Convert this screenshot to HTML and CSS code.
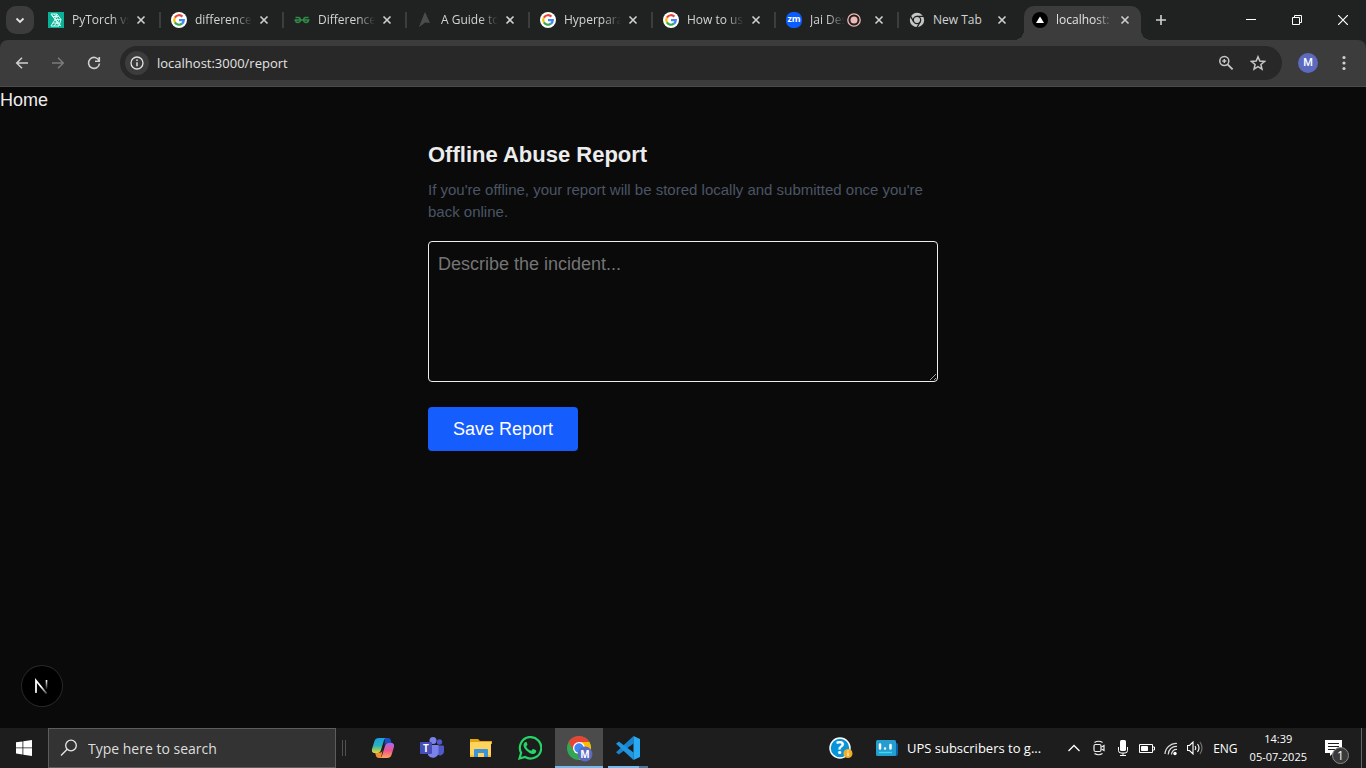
FILE: index.html
```html
<!DOCTYPE html>
<html lang="en">
<head>
<meta charset="utf-8">
<meta name="viewport" content="width=device-width, initial-scale=1">
<title>localhost:3000/report</title>
<link rel="stylesheet" href="styles.css">
</head>
<body>
<svg class="defs" aria-hidden="true">
  <defs>
    <symbol id="google" viewBox="0 0 16 16">
      <circle cx="8" cy="8" r="8" fill="#fff"/>
      <g fill="none" stroke-width="2.2">
        <path d="M3.9 5.6A4.8 4.8 0 0 1 11.4 4.6" stroke="#ea4335"/>
        <path d="M3.9 10.4A4.8 4.8 0 0 1 3.9 5.6" stroke="#fbbc05"/>
        <path d="M11 11.7A4.8 4.8 0 0 1 3.9 10.4" stroke="#34a853"/>
        <path d="M8 8.1H12.8A4.8 4.8 0 0 1 11 11.7" stroke="#4285f4"/>
      </g>
    </symbol>
    <symbol id="close" viewBox="0 0 16 16">
      <path d="M4.5 4.5l7 7M11.5 4.5l-7 7" fill="none" stroke="#d0d0d0" stroke-width="1.6"/>
    </symbol>
  </defs>
</svg>

<header class="browser">
  <div class="tabstrip">
    <button class="tab-search" aria-label="Search tabs"><svg width="16" height="16" viewBox="0 0 16 16"><path d="M4.5 6.5L8 10l3.500-3.500" fill="none" stroke="#e3e3e3" stroke-width="1.800"/></svg></button>
    <div class="tabs">
      <div class="tab">
        <svg class="favicon" viewBox="0 0 16 16"><rect width="16" height="16" fill="#09b096"/><g fill="none" stroke="#d9fff5" stroke-width="1"><path d="M3 2h6l4 5.500-2 6.500H3l4-6.500zM3 2l10 12M6 2l5 6-5 6M9 2l-2 5.500L11 14M4.500 4.500h6M7 7.500h6M4.500 11h7"/></g></svg>
        <span class="title">PyTorch vs</span>
        <button class="close" aria-label="Close tab"><svg width="16" height="16"><use href="#close"/></svg></button>
      </div>
      <div class="tab">
        <svg class="favicon"><use href="#google"/></svg>
        <span class="title">difference</span>
        <button class="close" aria-label="Close tab"><svg width="16" height="16"><use href="#close"/></svg></button>
      </div>
      <div class="tab">
        <svg class="favicon" viewBox="0 0 16 16"><g fill="none" stroke="#2f8d46" stroke-width="1.400"><path d="M1.500 5.500h2.800a2.500 2.500 0 1 1-2.800 3M.5 8h15M14.500 5.500h-2.800a2.500 2.500 0 1 0 2.800 3"/></g></svg>
        <span class="title">Difference</span>
        <button class="close" aria-label="Close tab"><svg width="16" height="16"><use href="#close"/></svg></button>
      </div>
      <div class="tab">
        <svg class="favicon" viewBox="0 0 16 16"><path d="M8 0L2 15l6-4z" fill="#303233"/><path d="M8 0l5 11-5-.500L2 15z" fill="#4a4c4e"/></svg>
        <span class="title">A Guide to</span>
        <button class="close" aria-label="Close tab"><svg width="16" height="16"><use href="#close"/></svg></button>
      </div>
      <div class="tab">
        <svg class="favicon"><use href="#google"/></svg>
        <span class="title">Hyperpara</span>
        <button class="close" aria-label="Close tab"><svg width="16" height="16"><use href="#close"/></svg></button>
      </div>
      <div class="tab">
        <svg class="favicon"><use href="#google"/></svg>
        <span class="title">How to us</span>
        <button class="close" aria-label="Close tab"><svg width="16" height="16"><use href="#close"/></svg></button>
      </div>
      <div class="tab">
        <span class="favicon zoom-logo">zm</span>
        <span class="title">Jai Des</span>
        <svg class="recording" viewBox="0 0 14 14"><circle cx="7" cy="7" r="6.200" fill="none" stroke="#f2b8b5" stroke-width="1.300"/><circle cx="7" cy="7" r="3.500" fill="#f2b8b5"/></svg>
        <button class="close" aria-label="Close tab"><svg width="16" height="16"><use href="#close"/></svg></button>
      </div>
      <div class="tab">
        <svg class="favicon" viewBox="0 0 16 16"><circle cx="8" cy="8" r="7.200" fill="#c4c7c5"/><g fill="none" stroke="#202221" stroke-width="1.300"><circle cx="8" cy="8" r="3.700"/><path d="M8 4.300h7.200M4.800 9.900L1.200 3.700M11.200 9.900L7.600 16"/></g></svg>
        <span class="title fits">New Tab</span>
        <button class="close" aria-label="Close tab"><svg width="16" height="16"><use href="#close"/></svg></button>
      </div>
      <div class="tab active">
        <svg class="favicon" viewBox="0 0 16 16"><circle cx="8" cy="8" r="8" fill="#000"/><path d="M8 4.500l4 6.500H4z" fill="#fff"/></svg>
        <span class="title">localhost:</span>
        <button class="close" aria-label="Close tab"><svg width="16" height="16"><use href="#close"/></svg></button>
      </div>
    </div>
    <button class="new-tab" aria-label="New tab"><svg width="16" height="16" viewBox="0 0 16 16"><path d="M8 3v10M3 8h10" stroke="#d0d0d0" stroke-width="1.600"/></svg></button>
    <div class="window-controls">
      <button aria-label="Minimize"><svg width="10" height="10"><path d="M0 4.500h10" stroke="#fff"/></svg></button>
      <button aria-label="Restore"><svg width="10" height="10" fill="none" stroke="#fff"><path d="M.5 2.500h7v7h-7zM2.500 2V.5h7v7H8"/></svg></button>
      <button aria-label="Close"><svg width="10" height="10"><path d="M0 0l10 10M10 0L0 10" stroke="#fff" stroke-width="1.200"/></svg></button>
    </div>
  </div>
  <div class="toolbar">
    <button class="tool" aria-label="Back"><svg width="16" height="16" viewBox="0 0 16 16"><path d="M14 8H3M8 2.700L2.700 8 8 13.300" fill="none" stroke="#d0d0d0" stroke-width="1.500"/></svg></button>
    <button class="tool" aria-label="Forward"><svg width="16" height="16" viewBox="0 0 16 16"><path d="M2 8h11M8 2.700L13.300 8 8 13.300" fill="none" stroke="#7b7b7b" stroke-width="1.500"/></svg></button>
    <button class="tool" aria-label="Reload"><svg width="16" height="16" viewBox="0 0 16 16"><path d="M13 5.500A5.500 5.500 0 1 0 13.500 8.500M13.300 2v4.200H9" fill="none" stroke="#d0d0d0" stroke-width="1.600"/></svg></button>
    <div class="omnibox">
      <button class="site-info" aria-label="View site information"><svg width="14" height="14" viewBox="0 0 14 14"><circle cx="7" cy="7" r="6" fill="none" stroke="#e3e3e3" stroke-width="1.300"/><path d="M7 6.200v4M7 3.500v1.500" stroke="#e3e3e3" stroke-width="1.500"/></svg></button>
      <input class="address" aria-label="Address" value="localhost:3000/report">
      <button class="tool" aria-label="Zoom"><svg width="16" height="16" viewBox="0 0 16 16" fill="none" stroke="#c7c7c7"><circle cx="6.300" cy="6" r="4.500" stroke-width="1.500"/><path d="M9.600 9.300l5 5" stroke-width="1.800"/><path d="M6.300 4v4M4.300 6h4" stroke-width="1.400"/></svg></button>
      <button class="tool" aria-label="Bookmark this tab"><svg width="16" height="16" viewBox="0 0 16 16"><path d="M8 1.800l1.800 4.300 4.700.4-3.600 3 1.100 4.600L8 11.700l-4 2.400 1.100-4.600-3.600-3 4.700-.4z" fill="none" stroke="#c7c7c7" stroke-width="1.500"/></svg></button>
    </div>
    <button class="avatar" aria-label="Profile">M</button>
    <button class="tool" aria-label="Menu"><svg width="16" height="16" fill="#d0d0d0"><circle cx="8" cy="2.500" r="1.600"/><circle cx="8" cy="8" r="1.600"/><circle cx="8" cy="13.500" r="1.600"/></svg></button>
  </div>
</header>

<main class="page">
  <nav><a class="home" href="#">Home</a></nav>
  <form class="report">
    <h1>Offline Abuse Report</h1>
    <p>If you're offline, your report will be stored locally and submitted once you're back online.</p>
    <textarea aria-label="Describe the incident" placeholder="Describe the incident..."></textarea>
    <button class="save" type="button">Save Report</button>
  </form>
  <button class="dev-badge" aria-label="Open Next.js dev tools">
    <svg width="40" height="40" viewBox="0 0 40 40"><defs><linearGradient id="nd" gradientUnits="userSpaceOnUse" x1="20" y1="20" x2="25" y2="27"><stop stop-color="#fff"/><stop offset="1" stop-color="#fff" stop-opacity=".3"/></linearGradient><linearGradient id="nv" gradientUnits="userSpaceOnUse" x1="0" y1="14" x2="0" y2="24"><stop stop-color="#fff"/><stop offset="1" stop-color="#fff" stop-opacity="0"/></linearGradient></defs><path d="M14 27V14.500l10.500 13" fill="none" stroke="url(#nd)" stroke-width="1.800"/><path d="M24.500 14v9" stroke="url(#nv)" stroke-width="1.600"/></svg>
  </button>
</main>

<footer class="taskbar">
  <button class="start" aria-label="Start"><svg width="16" height="16" fill="#fff"><path d="M0 2.300l6.500-.9v6.100H0zM7.300 1.300L16 0v7.500H7.300zM0 8.300h6.500v6.200L0 13.600zM7.300 8.300H16V16l-8.700-1.300z"/></svg></button>
  <label class="search">
    <svg width="18" height="18" fill="none" stroke="#e8e8e8" stroke-width="1.300"><circle cx="11" cy="6.500" r="5.300"/><path d="M7.200 10.300L1 16.500"/></svg>
    <input placeholder="Type here to search" aria-label="Type here to search">
  </label>
  <span class="grip"></span>
  <div class="apps">
    <button aria-label="Copilot"><svg width="24" height="24" viewBox="0 0 24 24">
      <defs><linearGradient id="ca" x1="0" y1="0" x2="0" y2="1"><stop stop-color="#189fe8"/><stop offset=".5" stop-color="#28b3bb"/><stop offset="1" stop-color="#e3d72f"/></linearGradient><linearGradient id="cb" x1="0" y1="0" x2="0" y2="1"><stop stop-color="#a66bec"/><stop offset=".5" stop-color="#f0558f"/><stop offset="1" stop-color="#ffa55b"/></linearGradient></defs>
      <path d="M14 2h3c2 0 2.500 1 3 2.800l.7 2.200h-4c-2 0-2.700 1-3.300 3z" fill="#1b4fc5"/><path d="M10 22H8c-2 0-2.700-1-3.200-2.800L4 16.800h4.500c2 0 2.600-1 3.200-3z" fill="#f08d35"/>
      <path d="M8 2h7c-1.400.6-1.900 1.800-2.400 3.500L10 14c-.7 2-1.500 3-3.500 3H4c-3 0-3.500-1.500-2.800-4.500L3.500 5C4.200 3 5.500 2 8 2z" fill="url(#ca)"/>
      <path d="M16 22H9c1.400-.6 1.900-1.800 2.400-3.500L14 10c.7-2 1.500-3 3.500-3H20c3 0 3.500 1.500 2.800 4.500L20.500 19c-.7 2-2 3-4.500 3z" fill="url(#cb)"/></svg></button>
    <button aria-label="Teams"><svg width="24" height="24" viewBox="0 0 24 24"><circle cx="19.500" cy="6" r="2.700" fill="#5059c9"/><path d="M16 9.500h7a1 1 0 0 1 1 1V16a4 4 0 0 1-7 2z" fill="#5059c9"/><circle cx="13" cy="4.500" r="3.500" fill="#7b83eb"/><path d="M8 9h10.500v8a5.700 5.700 0 0 1-10.500 2z" fill="#7b83eb"/><rect y="6" width="12" height="12" rx="1" fill="#464eb8"/><text x="6" y="15.500" text-anchor="middle" class="glyph">T</text></svg></button>
    <button aria-label="File Explorer"><svg width="24" height="24" viewBox="0 0 24 24"><path d="M1 4V3h8l2 2h12v3H1z" fill="#e5a50a"/><path d="M1 6h21v15H1z" fill="#ffd45e"/><path d="M5 21v-7a1 1 0 0 1 1-1h12a1 1 0 0 1 1 1v7h-4v-4H9v4z" fill="#3a94d6"/><path d="M1 19h4v2H1zM19 19h3v2h-3z" fill="#f6bd36"/></svg></button>
    <button aria-label="WhatsApp"><svg width="24" height="24" viewBox="0 0 24 24"><path d="M1.500 22.500l1.600-5.700A10.700 10.700 0 1 1 7.100 21z" fill="#1d1d1d" stroke="#25d366" stroke-width="2.200"/><path d="M8.900 6.700c-.3-.6-.5-.7-1-.7-.7 0-1.100.3-1.500.8-2 2.500-.2 5.500 2 7.700 2.300 2.300 5.300 4.100 7.800 3.200 1.200-.5 2.100-1.400 2-2.800 0-.4-.3-.6-.7-.8l-2-1c-.5-.2-.8-.1-1.100.3l-.8 1c-.3.300-.5.400-1 .2-1.900-.8-3.300-2-4.200-3.700-.3-.5-.1-.7.200-1l.7-.9c.2-.3.200-.5.100-.8z" fill="#25d366"/></svg></button>
    <button class="current" aria-label="Chrome"><svg width="28" height="28" viewBox="0 0 28 28"><circle cx="14" cy="14" r="12" fill="#30a852"/><path d="M3.600 8A12 12 0 0 1 24.400 8H14L8.800 17z" fill="#e94335"/><path d="M24.400 8A12 12 0 0 1 14 26l5.200-9L14 8z" fill="#fbbc05"/><circle cx="14" cy="14" r="6" fill="#fff"/><circle cx="14" cy="14" r="4.700" fill="#4285f4"/><circle cx="20" cy="20" r="7.500" fill="#5c6bc0"/><text x="20" y="23.500" text-anchor="middle" class="glyph">M</text></svg></button>
    <button class="running" aria-label="Visual Studio Code"><svg width="24" height="24" viewBox="0 0 24 24"><path d="M0 16.200L17.500 0v7.500L2.800 18.500z" fill="#1684ce"/><path d="M0 7.800L17.500 24v-7.500L2.800 5.500z" fill="#2196df"/><path d="M17.500 0L24 3v18l-6.500 3z" fill="#2aaaf2"/></svg></button>
  </div>
  <div class="tray">
    <button class="help" aria-label="Help"><svg width="24" height="24" viewBox="0 0 24 24"><circle cx="11" cy="12" r="10" fill="#0794d8" stroke="#fff" stroke-width="1.500"/><text x="11" y="18" text-anchor="middle" class="question">?</text><circle cx="19" cy="17.500" r="4.500" fill="#f5ad22"/><path d="M19 16.500v3.500M19 14.500v1" stroke="#fff" stroke-width="1.200"/></svg></button>
    <button class="news"><svg width="22" height="16" viewBox="0 0 22 16"><path d="M17 3h3.500q1.500 0 1.500 1.500v9q0 2.500-2 2.500h-4z" fill="#0862a8"/><rect width="20" height="16" rx="1.500" fill="#249ed0"/><g stroke="#fff" stroke-width="2.500" stroke-linecap="round"><path d="M4 4.500v4M9 8.400v.1M14.500 5v3.500"/></g><path d="M3 12.500h13" stroke="#39d9ee" stroke-width="1.500"/></svg><span>UPS subscribers to g...</span></button>
    <div class="status">
      <svg class="wide" width="16" height="16" fill="none" stroke="#fff" stroke-width="1.300"><path d="M2.500 11L8 5.500l5.500 5.500"/></svg>
      <svg width="16" height="16" fill="none" stroke="#eee" stroke-width="1.200"><rect x="3" y="4.500" width="7" height="7" rx="1.500"/><path d="M10.500 7l2.500-1.500v5L10.500 9M3.500 2.500q4-2.500 8 0M3.500 13.500q4 2.500 8 0"/></svg>
      <svg width="16" height="16" fill="#fff"><rect x="5" y="0" width="6" height="11" rx="1.500"/><path d="M3.500 7v3.500q0 2.500 2.500 2.500h4q2.500 0 2.500-2.500V7M8 13v2.500M5 15.500h6" fill="none" stroke="#fff"/></svg>
      <svg width="16" height="16" fill="none" stroke="#fff"><path d="M.5 4.500h13v8H.5zM14 7h1.500v3H14"/><path d="M2.500 6.500h6v4h-6z" fill="#fff"/></svg>
      <svg width="16" height="16" fill="none" stroke="#ddd" stroke-width="1.200"><path d="M2 14A11 11 0 0 1 14 3.500M5.200 14.500A8 8 0 0 1 14 6.500M8.500 14.500A5 5 0 0 1 14 9.500"/><circle cx="12" cy="13.500" r="1.700" fill="#fff" stroke="none"/></svg>
      <svg width="16" height="16" fill="none" stroke="#fff" stroke-width="1.100"><path d="M.5 5.500h2l3.500-3.500v12L2.500 10.500h-2zM8 6q1.500 2 0 4M10.500 4q3 4 0 8"/><path d="M13 2q4 6 0 12" stroke="#777"/></svg>
    </div>
    <span class="language">ENG</span>
    <time class="clock" datetime="2025-07-05T14:39"><span>14:39</span><span>05-07-2025</span></time>
    <button class="notifications" aria-label="1 new notification"><svg width="17" height="16" fill="#fff"><path d="M0 0h17v13h-9l-3 3v-3H0z"/><path d="M3 3.500h11M3 6.500h11M3 9.500h7" stroke="#1d1d1d"/></svg><span class="count">1</span></button>
    <span class="show-desktop"></span>
  </div>
</footer>
</body>
</html>
```
FILE: styles.css
```css
* { box-sizing: border-box; }

body {
  display: flex;
  flex-direction: column;
  min-height: 100vh;
  margin: 0;
  background: #0a0a0a;
  color: #ededed;
  font-family: "Open Sans", "Noto Sans", sans-serif;
  font-size: 12px;
}

button, input {
  padding: 0;
  border: 0;
  background: none;
  color: inherit;
  font: inherit;
}

svg { display: block; flex: none; }
.defs { position: absolute; width: 0; height: 0; }

/* Tab strip */
.tabstrip {
  display: flex;
  align-items: center;
  height: 40px;
  padding-left: 6px;
  background: #202221;
}
.tab-search {
  display: grid;
  place-items: center;
  width: 28px;
  height: 28px;
  border-radius: 10px;
  background: #3c3c3c;
}
.tabs {
  display: flex;
  align-self: flex-end;
  gap: 6px;
  min-width: 0;
  margin-left: 6px;
}
.tab {
  position: relative;
  display: flex;
  flex: 0 1 117px;
  align-items: center;
  width: 117px;
  min-width: 0;
  height: 34px;
  padding: 0 8px 6px;
  color: #d2d3d2;
}
.tab:not(.active):not(:nth-last-child(2))::after {
  content: "";
  position: absolute;
  top: 6px;
  right: -4px;
  width: 2px;
  height: 16px;
  background: #3c3e3d;
}
.tab.active {
  border-radius: 10px 10px 0 0;
  background: #3c3c3c;
  color: #e3e3e3;
}
.tab.active::before,
.tab.active::after {
  content: "";
  position: absolute;
  bottom: 0;
  width: 10px;
  height: 10px;
}
.tab.active::before {
  left: -10px;
  background: radial-gradient(circle at 0 0, transparent 10px, #3c3c3c 10px);
}
.tab.active::after {
  right: -10px;
  background: radial-gradient(circle at 100% 0, transparent 10px, #3c3c3c 10px);
}
.favicon { flex: none; width: 16px; height: 16px; }
.zoom-logo {
  border-radius: 7px;
  background: #0b5cff;
  color: #fff;
  font-size: 9px;
  font-weight: 700;
  line-height: 14px;
  text-align: center;
}
.title {
  flex: 1;
  min-width: 0;
  margin: 0 0 0 8px;
  overflow: hidden;
  white-space: nowrap;
  line-height: 20px;
  mask-image: linear-gradient(to left, transparent 4px, #000 22px);
}
.title.fits { mask-image: none; }
.recording { width: 14px; height: 14px; margin-right: 10px; margin-left: -2px; }
.close, .new-tab { display: grid; place-items: center; }
.new-tab { width: 28px; height: 28px; margin-left: 6px; }
.window-controls { display: flex; margin-left: auto; }
.window-controls button { display: grid; place-items: center; width: 46px; height: 40px; }

/* Toolbar */
.browser { background: #202221; }
.toolbar {
  display: flex;
  align-items: center;
  height: 47px;
  padding: 0 8px;
  border-bottom: 1px solid #4b4b4b;
  border-radius: 8px 8px 0 0;
  background: #3c3c3c;
}
.tool { display: grid; place-items: center; width: 28px; height: 28px; margin-right: 8px; }
.toolbar > .tool:last-child { margin-right: 0; }
.omnibox {
  display: flex;
  flex: 1;
  align-items: center;
  min-width: 0;
  height: 34px;
  margin: 0 16px 0 4px;
  padding: 0 4px 0 5px;
  border-radius: 17px;
  background: #282828;
}
.omnibox .tool { width: 24px; }
.site-info {
  display: grid;
  place-items: center;
  width: 24px;
  height: 24px;
  border-radius: 50%;
  background: #3c3c3c;
}
.address {
  flex: 1;
  min-width: 0;
  margin-left: 8px;
  color: #e3e3e3;
  font-size: 13px;
}
.avatar {
  width: 20px;
  height: 20px;
  margin-right: 12px;
  border-radius: 50%;
  background: #5c6bc0;
  color: #fff;
  font: 500 11px/20px Roboto, sans-serif;
  text-align: center;
}

/* Page */
.page {
  position: relative;
  flex: 1;
  font: 18px/26px "Liberation Sans", Arial, sans-serif;
}
.home { display: block; color: #ededed; text-decoration: none; }
.report { max-width: 510px; margin: 27px auto 0; }
.report h1 { margin: 0; font-size: 22px; line-height: 30px; }
.report p { margin: 9px 0 18px; color: #4a5565; font-size: 15px; line-height: 22px; }
.report textarea {
  display: block;
  width: 100%;
  height: 141px;
  margin: 0;
  padding: 9px;
  border: 1px solid #ededed;
  border-radius: 4px;
  background: transparent;
  color: #ededed;
  font: inherit;
}
.report textarea::placeholder { color: #757575; }
.save {
  margin-top: 25px;
  padding: 9px 25px;
  border-radius: 4px;
  background: #155dfc;
  color: #fff;
}
.dev-badge {
  position: absolute;
  bottom: 22px;
  left: 22px;
  border-radius: 50%;
  background: #000;
  box-shadow: 0 0 0 1px #292929;
}

/* Taskbar */
.taskbar {
  display: flex;
  height: 40px;
  background: #1d1d1d;
  color: #fff;
}
.taskbar button { display: grid; place-items: center; }
.start { width: 48px; }
.search {
  display: flex;
  flex: 0 1 288px;
  align-items: center;
  gap: 10px;
  padding-left: 11px;
  border: 1px solid #5d5d5d;
  background: #333;
}
.search input { flex: 1; min-width: 0; font-size: 14px; }
.search input::placeholder { color: #dedede; }
.grip {
  align-self: center;
  width: 4px;
  height: 16px;
  margin: 0 13px 0 6px;
  border: solid #515151;
  border-width: 0 1px;
}
.apps { display: flex; gap: 1px; }
.apps button { width: 48px; }
.apps .current { background: linear-gradient(#76b9ed, #76b9ed) bottom / 100% 2px no-repeat #4b4b4b; }
.apps .running {
  background: linear-gradient(to right, #76b9ed 31px, #4c7799 31px) center bottom / 40px 2px no-repeat;
}
.glyph { fill: #fff; font: 700 10px "Open Sans", sans-serif; }
.question { fill: #fff; font: 700 17px "Open Sans", sans-serif; }
.tray { display: flex; align-items: center; margin-left: auto; }
.tray .news { display: flex; align-items: center; gap: 9px; margin: 0 25px 0 23px; font-size: 13px; }
.status { display: flex; gap: 8px; }
.status .wide { margin-right: 1px; }
.language { margin-left: 10px; }
.clock {
  display: flex;
  flex-direction: column;
  align-items: center;
  margin-left: 12px;
  font-size: 11px;
  line-height: 18px;
}
.taskbar .notifications { position: relative; margin: 0 19px 0 18px; }
.count {
  position: absolute;
  top: 7px;
  left: 7px;
  width: 17px;
  height: 17px;
  border: 1px solid #8a8a8a;
  border-radius: 50%;
  background: #3a3a3a;
  line-height: 15px;
}
.show-desktop { align-self: stretch; width: 5px; border-left: 1px solid #666; }
```
